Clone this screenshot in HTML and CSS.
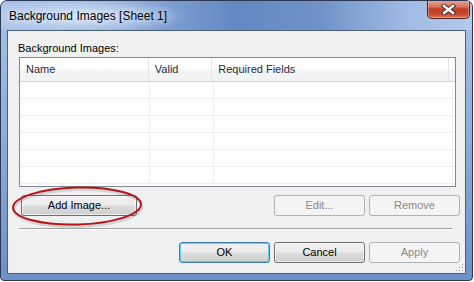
FILE: index.html
```html
<!DOCTYPE html>
<html>
  <head>
    <meta charset="UTF-8">
    <link rel="stylesheet" href="styles.css">
  </head>
  <body>
    <div class="window">
      <div class="titlebar">
        <span class="title">Background Images [Sheet 1]</span>
        <div class="close">
          <svg width="15" height="11" viewBox="0 0 15 11">
            <path d="M3 2 L12 9 M12 2 L3 9" stroke="#3a2a2a" stroke-width="4.2" stroke-linecap="square" fill="none"/>
            <path d="M3 2 L12 9 M12 2 L3 9" stroke="#ffffff" stroke-width="2.4" stroke-linecap="square" fill="none"/>
          </svg>
        </div>
      </div>

      <div class="client">
        <div class="label">Background Images:</div>

        <div class="list">
          <div class="list-head">
            <div class="col c-name">Name</div
            ><div class="col c-valid">Valid</div
            ><div class="col c-fields">Required Fields</div
            ><div class="col c-fill"></div>
          </div>
          <div class="row"><div class="cell c-name"></div><div class="cell c-valid"></div><div class="cell c-fields"></div></div>
          <div class="row"><div class="cell c-name"></div><div class="cell c-valid"></div><div class="cell c-fields"></div></div>
          <div class="row"><div class="cell c-name"></div><div class="cell c-valid"></div><div class="cell c-fields"></div></div>
          <div class="row"><div class="cell c-name"></div><div class="cell c-valid"></div><div class="cell c-fields"></div></div>
          <div class="row"><div class="cell c-name"></div><div class="cell c-valid"></div><div class="cell c-fields"></div></div>
          <div class="row"><div class="cell c-name"></div><div class="cell c-valid"></div><div class="cell c-fields"></div></div>
          <div class="row"><div class="cell c-name"></div><div class="cell c-valid"></div><div class="cell c-fields"></div></div>
        </div>

        <div class="actions">
          <div class="add-wrap">
            <div class="btn add">Add Image...</div>
            <svg class="ring" width="136" height="46" viewBox="0 0 136 46">
              <ellipse cx="67" cy="24" rx="64" ry="18.5" transform="rotate(-1.5 67 24)" fill="none" stroke="rgba(0,0,0,0.12)" stroke-width="3"/>
              <ellipse cx="66" cy="22" rx="64" ry="18.5" transform="rotate(-1.5 66 22)" fill="none" stroke="#b3161b" stroke-width="2"/>
            </svg>
          </div>
          <div class="spacer"></div>
          <div class="btn disabled">Edit...</div>
          <div class="btn disabled">Remove</div>
        </div>

        <div class="separator"></div>

        <div class="footer">
          <div class="btn default">OK</div>
          <div class="btn">Cancel</div>
          <div class="btn disabled">Apply</div>
        </div>

        <svg class="grip" width="9" height="9" viewBox="0 0 9 9">
          <rect x="7" y="1" width="1" height="1" fill="#a0a0a0"/>
          <rect x="4" y="4" width="1" height="1" fill="#a0a0a0"/>
          <rect x="7" y="4" width="1" height="1" fill="#a0a0a0"/>
          <rect x="1" y="7" width="1" height="1" fill="#a0a0a0"/>
          <rect x="4" y="7" width="1" height="1" fill="#a0a0a0"/>
          <rect x="7" y="7" width="1" height="1" fill="#a0a0a0"/>
        </svg>
      </div>
    </div>
  </body>
</html>
```

FILE: styles.css
```css
body {
  margin: 0;
  background-color: #ffffff;
  font-family: "Liberation Sans", Arial, sans-serif;
  font-size: 11px;
  color: #000000;
}

.window {
  box-sizing: border-box;
  width: 473px;
  height: 281px;
  border: 1px solid #2b3a52;
  border-radius: 7px 7px 4px 4px;
  padding: 0 6px 6px;
  display: flex;
  flex-direction: column;
  background: linear-gradient(to bottom, #a8c2e6 0%, #8eaedc 45%, #6b91c8 100%);
  overflow: hidden;
}

.titlebar {
  position: relative;
  height: 29px;
  margin: 0 -6px;
  padding-left: 8px;
  display: flex;
  align-items: center;
  border-radius: 6px 6px 0 0;
  background:
    radial-gradient(ellipse 105px 19px at 82px 15px, rgba(222, 233, 247, 0.95), rgba(222, 233, 247, 0) 100%),
    linear-gradient(to right, #aac3e6 0%, #8eaddb 25%, #6388c2 50%, #6f93c8 68%, #a0bbe3 86%, #b3c9e9 100%);
}

.title {
  font-size: 12px;
  color: #000000;
  text-shadow: 0 0 6px rgba(255, 255, 255, 0.9);
}

.close {
  position: absolute;
  right: 2px;
  top: -1px;
  box-sizing: border-box;
  width: 43px;
  height: 19px;
  border: 1px solid #4a2521;
  border-top: 0;
  border-radius: 0 0 5px 5px;
  background: linear-gradient(to bottom, #e8a594 0%, #d77a66 35%, #c1402b 50%, #c54430 75%, #dc7653 100%);
  box-shadow: inset 0 0 0 1px rgba(255, 200, 180, 0.45);
  display: flex;
  align-items: center;
  justify-content: center;
}

.client {
  position: relative;
  flex: 1;
  border: 1px solid #4b5f7c;
  background-color: #f0f0f0;
  padding: 0 5px 0 10px;
  display: flex;
  flex-direction: column;
}

.label {
  margin-top: 10px;
  height: 15px;
  line-height: 15px;
}

.list {
  box-sizing: border-box;
  margin: 1px 4px 0 1px;
  height: 130px;
  border: 1px solid #828790;
  background-color: #ffffff;
  overflow: hidden;
}

.list-head {
  display: flex;
  height: 23px;
  border-bottom: 1px solid #d5d5d5;
  background: linear-gradient(to bottom, #ffffff 0%, #ffffff 45%, #f3f4f6 55%, #f1f2f4 100%);
  color: #1e2b3e;
}

.col {
  box-sizing: border-box;
  padding-left: 6px;
  line-height: 22px;
  border-right: 1px solid #e3e5e8;
  white-space: nowrap;
}

.c-name {
  width: 130px;
}

.c-valid {
  width: 64px;
}

.c-fields {
  width: 239px;
}

.c-fill {
  flex: 1;
  border-right: 0;
}

.row {
  display: flex;
  box-sizing: border-box;
  height: 17px;
  border-bottom: 1px solid #f0f0f0;
}

.cell {
  box-sizing: border-box;
  border-right: 1px solid #f0f0f0;
}

.actions {
  display: flex;
  gap: 4px;
  margin-top: 8px;
  height: 21px;
}

.spacer {
  flex: 1;
}

.add-wrap {
  position: relative;
  margin-left: 3px;
}

.ring {
  position: absolute;
  left: -10px;
  top: -11px;
}

.btn {
  box-sizing: border-box;
  width: 91px;
  height: 21px;
  line-height: 19px;
  text-align: center;
  border: 1px solid #707070;
  border-radius: 3px;
  background: linear-gradient(to bottom, #f2f2f2 0%, #ebebeb 48%, #dddddd 52%, #cfcfcf 100%);
  box-shadow: inset 0 0 0 1px rgba(255, 255, 255, 0.6);
  color: #000000;
}

.btn.add {
  width: 116px;
}

.btn.disabled {
  border-color: #adb2b5;
  background: #f4f4f4;
  box-shadow: none;
  color: #8a8a8a;
}

.btn.default {
  border-color: #3c7fb1;
  box-shadow: inset 0 0 0 1px #5fc8f5;
}

.separator {
  margin: 12px 8px 0 1px;
  height: 1px;
  background-color: #a0a0a0;
  border-bottom: 1px solid #ffffff;
}

.footer {
  display: flex;
  justify-content: flex-end;
  gap: 4px;
  margin-top: 12px;
}

.grip {
  position: absolute;
  right: 1px;
  bottom: 1px;
}
```
